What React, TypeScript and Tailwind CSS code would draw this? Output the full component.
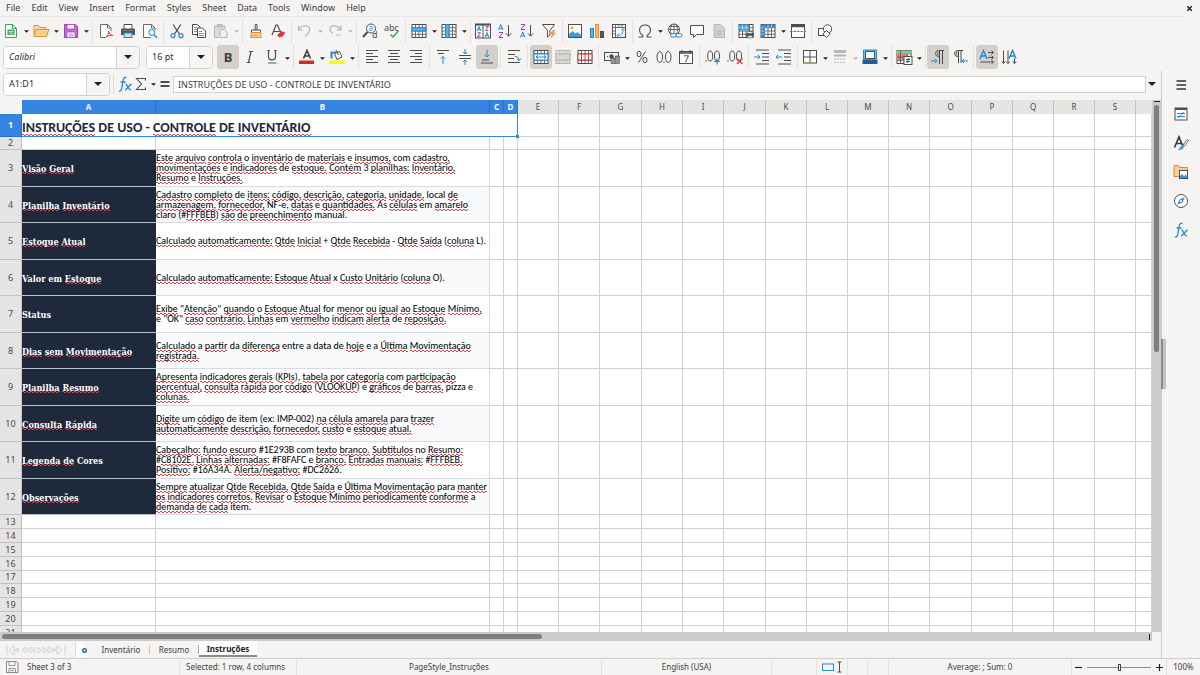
import React from "react";

type Item =
  | { kind: "icon"; name: string; label: string; pressed?: boolean; disabled?: boolean; menu?: boolean }
  | { kind: "sep" }
  | { kind: "thin" };

const G = "#4d4d4d";
const B = "#1e8bcd";
const L = "#b8b6b3";

const lines = (rows: [number, number, number][], color = G) =>
  rows.map(([x1, x2, y], i) => <path key={i} d={`M${x1} ${y}H${x2}`} stroke={color} />);

const gridBase = (stroke: string, fill = "#fff") => (
  <>
    <rect x="1" y="1.5" width="14" height="13" fill={fill} stroke={stroke} />
    <path d="M4.5 1.5v13M8 1.5v13M11.500 1.500v13M1 4.700h14M1 8h14M1 11.300h14" stroke={stroke} strokeWidth=".8" />
  </>
);

const art: Record<string, React.ReactNode> = {
  newdoc: (
    <>
      <path d="M2.500 1.500h7l4 4v9h-11z" fill="#fff" stroke="#3fa55a" />
      <path d="M9.500 1.500v4h4" stroke="#3fa55a" />
      <rect x="4.500" y="6.500" width="7" height="5.500" fill="#3fa55a" />
      <path d="M5.500 8.500h5M5.500 10.300h5M8 7.500v4" stroke="#d7efdc" strokeWidth=".7" />
    </>
  ),
  open: (
    <>
      <path d="M1 13V2.500h4.500l1.500 2h6v2.500" fill="#f8d9a8" stroke="#e0933a" />
      <path d="M1 13.500L3 6.500h13l-2.500 7z" fill="#fbd08d" stroke="#e0933a" />
    </>
  ),
  save: (
    <>
      <path d="M1.500 1.500h11l2 2v11h-13z" fill="#c06fd0" stroke="#a13fb8" />
      <rect x="4" y="1.500" width="7.500" height="4.500" fill="#f6f0f8" stroke="#a13fb8" strokeWidth=".7" />
      <rect x="4" y="9" width="8" height="5.500" fill="#fff" stroke="#a13fb8" strokeWidth=".7" />
      <path d="M5.500 11h5M5.500 12.800h5" stroke="#a13fb8" strokeWidth=".7" />
    </>
  ),
  pdf: (
    <>
      <path d="M13 8V5L9.500 1.500h-7v13H7" fill="#fff" stroke="#6b6b6b" />
      <path d="M9.500 1.500V5H13" stroke="#6b6b6b" />
      <path d="M7.500 14.500c2-1.500 3.500-4 3-6.500 1 3 2.500 4.500 4.500 4.500-2-.5-5 0-7.500 2z" stroke="#e0343f" />
    </>
  ),
  print: (
    <>
      <path d="M4 6V1.500h8V6" fill="#fff" stroke={G} />
      <rect x="1" y="5.500" width="14" height="6.500" rx="1" fill="#4d5358" />
      <path d="M2 7.500h12" stroke="#8a9095" strokeWidth=".7" />
      <rect x="4" y="10" width="8" height="4.500" fill="#bfe0f5" stroke={B} />
    </>
  ),
  preview: (
    <>
      <path d="M13 7V5L9.500 1.500h-8v13h7" fill="#fff" stroke="#6b6b6b" />
      <path d="M9.500 1.500V5H13" stroke="#6b6b6b" />
      <circle cx="9.800" cy="9.500" r="3" fill="#e4f2fb" stroke={B} />
      <path d="M12 11.800l3 3" stroke={B} strokeWidth="1.400" />
    </>
  ),
  cut: (
    <>
      <path d="M4 1.500l6.500 9.500M12 1.500L5.500 11" stroke="#454545" strokeWidth="1.200" />
      <circle cx="4" cy="12.700" r="2" stroke={B} strokeWidth="1.200" />
      <circle cx="12" cy="12.700" r="2" stroke={B} strokeWidth="1.200" />
    </>
  ),
  copy: (
    <>
      <path d="M1.500 1.500h5L9 4v7.500H1.500z" fill="#fff" stroke={G} />
      <path d="M3 4.500h3M3 6.500h3M3 8.500h3" stroke={B} strokeWidth=".8" />
      <path d="M6.500 5h5l3 3v6.500h-8z" fill="#fff" stroke={G} />
      <path d="M8 8.500h3M8 10.500h5M8 12.500h5" stroke={B} strokeWidth=".8" />
    </>
  ),
  paste: (
    <>
      <path d="M12 6V3H1.500v11.500H6" fill="#dedcd9" stroke={L} />
      <rect x="4.500" y="1.500" width="4.500" height="2.500" fill="#c9c7c4" stroke={L} />
      <path d="M7 6.500h4.500L14 9v5.500H7z" fill="#efeeec" stroke={L} />
    </>
  ),
  brush: (
    <>
      <path d="M7.200 1.500h1.800v5.500H7.200z" fill="#fff" stroke={G} />
      <path d="M3.500 9.500V7h9v2.500z" fill="#fff" stroke={G} />
      <path d="M3.500 9.500h9l.8 5H2.500z" fill="#fbd08d" stroke="#e0933a" />
      <path d="M3 12.500h7" stroke="#e0933a" strokeWidth=".8" />
    </>
  ),
  clear: (
    <>
      <path d="M2 12L6 2h1.500l3.500 8M3.500 8.500h6" stroke={G} strokeWidth="1.200" />
      <path d="M7.500 12l4-3.500 3.500 1.500-3 3.500-3 .5z" fill="#e0343f" stroke="#c9252f" strokeWidth=".6" />
    </>
  ),
  undo: <path d="M1.500 2.500v4.500H6M1.800 6.800C4.500 2 11 1.500 12.500 5.500c1 3-1.500 5-4.500 8" stroke={L} strokeWidth="1.200" />,
  redo: <path d="M14 2.500v4.500H9.500M13.700 6.800C11 2 4.500 1.500 3 5.500c-.6 3 1.500 4 3 4.500M9 12h5" stroke={L} strokeWidth="1.200" />,
  find: (
    <>
      <circle cx="9" cy="5.500" r="4.500" fill="#fff" stroke={G} />
      <path d="M5.500 9L1 14" stroke={G} strokeWidth="2" />
      <text x="6.500" y="8" fontSize="8" fill={B} fontFamily="Noto Sans">a</text>
      <text x="10" y="15" fontSize="9" fill={G} fontFamily="Noto Sans">d</text>
    </>
  ),
  spell: (
    <>
      <text x="0" y="7.500" fontSize="9" fill={G} fontFamily="Noto Sans">abc</text>
      <path d="M6.500 11.500l2.500 2.500 5.500-6" stroke="#2fae6b" strokeWidth="1.500" />
    </>
  ),
  row: (
    <>
      {gridBase(G)}
      <path d="M1 4.700h14v3.300H1z" fill="#5cb0e6" stroke={B} />
    </>
  ),
  col: (
    <>
      {gridBase(G)}
      <path d="M4.500 1.500H8v13H4.500z" fill="#5cb0e6" stroke={B} />
    </>
  ),
  sort: (
    <>
      <rect x=".500" y="1" width="15" height="14" fill="#fff" stroke={G} />
      <path d="M.5 1.800h15" stroke={G} strokeWidth="1.500" />
      <path d="M8 2v13" stroke={G} />
      <path d="M2.200 8l1.800-4.500L5.800 8M2.800 6.600h2.400M10.200 14l1.800-4.500 1.800 4.500M10.800 12.600h2.400" stroke={B} />
      <path d="M2.500 9.700h3l-3 4h3M10.500 3.700h3l-3 4h3" stroke="#a13fb8" />
    </>
  ),
  az: (
    <>
      <path d="M1.500 7l2.300-5.500L6 7M2.300 5.300h3" stroke={B} />
      <path d="M2 9.500h4L2 14.500h4" stroke="#a13fb8" />
      <path d="M11.500 2v11M8.800 10.300l2.700 2.900 2.700-2.900" stroke={G} />
    </>
  ),
  za: (
    <>
      <path d="M2 1.500h4L2 6.500h4" stroke="#a13fb8" />
      <path d="M1.500 14.500L3.800 9 6 14.500M2.300 12.800h3" stroke={B} />
      <path d="M11.500 2v11M8.800 10.300l2.700 2.900 2.700-2.900" stroke={G} />
    </>
  ),
  filter: (
    <>
      <path d="M1.500 1.500h12L9 7.500V12L6.500 14V7.500z" fill="#fff" stroke={G} />
      <path d="M12.500 7l-3 4h2L10 15l4.500-5h-2l1-3z" fill="#f5a33c" stroke="#e0843a" strokeWidth=".5" />
    </>
  ),
  image: (
    <>
      <rect x="1.500" y="1.500" width="13" height="13" fill="#fff" stroke={G} />
      <path d="M2 14v-3l3.500-3 3 2.500 2-1.500 3.500 3v2z" fill="#3d9bdc" />
      <circle cx="5" cy="4.800" r="1.500" fill="#f5a33c" />
    </>
  ),
  chart: (
    <>
      <rect x="1.500" y="5.500" width="3" height="9" fill="#5cb0e6" stroke={B} />
      <rect x="6.500" y="1.500" width="3" height="13" fill="#fbb95c" stroke="#e0933a" />
      <rect x="11.500" y="8.500" width="3" height="6" fill="#5b5b5b" stroke={G} />
    </>
  ),
  pivot: (
    <>
      <rect x="1.500" y="1.500" width="13" height="13" fill="#fff" stroke={G} />
      <path d="M1.500 4.500h13M4.500 1.500v13M8 1.500v3M11 1.500v3M1.500 8h3M1.500 11h3" stroke={G} strokeWidth=".8" />
      <path d="M7 12.500c4 0 5-2 5-6M5.800 12.500l2-2M5.800 12.500l2 2M12 5.500l-2 2M12 5.500l2 2" stroke={B} />
    </>
  ),
  omega: <path d="M1.500 14h4.300v-1.800C1 9.500 1.500 2 8 2s7 7.500 2.200 10.200V14h4.300" stroke={G} strokeWidth="1.100" />,
  link: (
    <>
      <circle cx="7" cy="6.500" r="5.500" fill="#fff" stroke={G} />
      <path d="M1.500 6.500h11M7 1v11M2.500 3.500h9M4.500 11c-1.500-3-1.500-6 .5-9.500M9.500 11c1.500-3 1.500-6-.5-9.500" stroke={G} strokeWidth=".8" />
      <rect x="3.500" y="10.500" width="6" height="3.500" rx="1.700" fill="#f5f4f2" stroke={B} />
      <rect x="9" y="10.500" width="6" height="3.500" rx="1.700" fill="#f5f4f2" stroke={B} />
    </>
  ),
  comment: <path d="M1.500 2.500h13v9h-7l-3 3v-3h-3z" fill="#fff" stroke={G} />,
  footer: (
    <>
      <path d="M3 1.500h6.500L13.500 5v9.500H3z" fill="#d4d2cf" stroke={L} />
      <path d="M5 8h6M5 10h6M5 12h6" stroke={L} />
    </>
  ),
  printarea: (
    <>
      {gridBase(G)}
      <path d="M1 1.500h10v6H1z" fill="#3d9bdc" />
      <path d="M4.500 1.500v6M8 1.500v6M1 4.700h10" stroke="#cfe7f7" strokeWidth=".7" />
      <rect x="8" y="10" width="8" height="3.500" rx=".500" fill="#4d5358" />
      <rect x="10" y="8.500" width="4" height="2" fill="#fff" stroke={G} strokeWidth=".6" />
      <rect x="10" y="12.500" width="4" height="2.500" fill="#bfe0f5" stroke={B} strokeWidth=".6" />
    </>
  ),
  freeze: (
    <>
      {gridBase(G)}
      <path d="M1 1.500h14v3.200H4.500v9.800H1z" fill="#2f8fd6" />
      <path d="M1 4.700h3.500M8 1.500v3.200M11.500 1.500v3.200M1 8h3.500M1 11.300h3.500" stroke="#bfe0f5" strokeWidth=".7" />
    </>
  ),
  split: (
    <>
      <rect x="1.500" y="1.500" width="13" height="13" fill="#fff" stroke={G} />
      <path d="M1.500 3h13" stroke={G} strokeWidth="2.500" />
      <path d="M0 8.500h16" stroke={B} strokeDasharray="2.500 1" />
    </>
  ),
  shapes: (
    <>
      <rect x="1.500" y="5.500" width="7" height="7" fill="#fff" stroke={G} />
      <circle cx="10.500" cy="6" r="4.200" fill="#fff" stroke={G} />
      <path d="M9.500 7.500l3.700 3.500-3.700 3.500L5.800 11z" fill="#fff" stroke={G} />
    </>
  ),
  italic: <path d="M7 2.500h4M4.500 13.500h4M9 2.500L6.500 13.500" stroke={G} strokeWidth="1.200" />,
  underline: (
    <>
      <path d="M3.500 1.500h2.500M10 1.500h2.500M4.500 1.500v6c0 4.500 7 4.500 7 0v-6" stroke={G} strokeWidth="1.200" />
      <path d="M4 14h8.500" stroke={B} strokeWidth="1.200" />
    </>
  ),
  fontcolor: (
    <>
      <path d="M4.500 9.500L8 1.500l3.500 8M5.700 7h4.700" stroke="#3d3d3d" strokeWidth="1.600" />
      <rect x="0" y="11.500" width="15" height="3.500" fill="#c9302a" />
    </>
  ),
  highlight: (
    <>
      <path d="M2.500 9.500V3.500h5" stroke={B} strokeWidth="2" />
      <path d="M5.500 4.500l5-2 2.500 5.500-5 2.500z" fill="#fff" stroke={G} />
      <path d="M7 1l2.500 5" stroke={G} />
      <rect x="0" y="11.500" width="16" height="3.500" fill="#fcfc10" />
    </>
  ),
  left: <>{lines([[2, 14, 1.5], [2, 9, 4.500], [2, 14, 7.500], [2, 9, 10.500], [2, 14, 13.500]])}</>,
  center: <>{lines([[2, 14, 1.5], [4, 12, 4.500], [2, 14, 7.500], [4, 12, 10.500], [2, 14, 13.500]])}</>,
  right: <>{lines([[2, 14, 1.5], [7, 14, 4.500], [2, 14, 7.500], [7, 14, 10.500], [2, 14, 13.500]])}</>,
  top: (
    <>
      {lines([[2, 14, 1.5], [3, 9, 4.500]])}
      <path d="M8 15V7.500M5.800 9.700L8 7.500l2.200 2.200" stroke={B} />
    </>
  ),
  middle: (
    <>
      {lines([[2, 14, 6.5], [2, 14, 9.500]])}
      <path d="M8 0v5M6 3l2 2 2-2M8 16v-5M6 13l2-2 2 2" stroke={B} />
    </>
  ),
  bottom: (
    <>
      {lines([[3, 10, 11], [2, 14, 14]])}
      <path d="M8 1v7M5.800 5.800L8 8l2.200-2.200" stroke={B} />
    </>
  ),
  wrap: (
    <>
      {lines([[2, 14, 1.5], [2, 9, 5.5], [2, 8, 9.500], [2, 14, 13.500]])}
      <path d="M9 7.500c3 0 4 1.500 4 4M10.800 9.500l2.200 2.200 2.200-2.200" stroke={B} />
    </>
  ),
  merge: (
    <>
      {gridBase(G)}
      <path d="M1 5h14v6H1z" fill="#fff" stroke={B} />
      <path d="M3 8h10M5 6.300L3 8l2 1.700M11 6.300L13 8l-2 1.700" stroke={B} />
    </>
  ),
  mergecells: (
    <>
      {gridBase(L, "#e6e4e1")}
      <path d="M1 5h14v6H1z" fill="#dad8d5" stroke={L} />
    </>
  ),
  unmerge: (
    <>
      {gridBase(G)}
      <path d="M1 5h14v6H1zM4.500 5v6M8 5v6M11.500 5v6" fill="#fff" stroke="#e0343f" />
    </>
  ),
  currency: (
    <>
      <rect x=".500" y="3.500" width="14" height="8" stroke={G} />
      <circle cx="7.500" cy="7.500" r="2.200" fill={G} />
      <path d="M3 7.500h1M11 7.500h1" stroke={G} />
      <rect x="7" y="9" width="4" height="5.500" fill="#777" stroke={G} strokeWidth=".6" />
      <rect x="11.500" y="7" width="4" height="7.500" fill="#777" stroke={G} strokeWidth=".6" />
      <path d="M7 11h4M7 13h4M11.500 9h4M11.500 11h4M11.500 13h4" stroke="#ddd" strokeWidth=".6" />
    </>
  ),
  percent: (
    <>
      <ellipse cx="5" cy="5" rx="2" ry="2.700" stroke={G} />
      <ellipse cx="11" cy="11" rx="2" ry="2.700" stroke={G} />
      <path d="M11.500 2.500l-7 11" stroke={G} />
    </>
  ),
  number: (
    <>
      <ellipse cx="3.800" cy="8" rx="2.800" ry="5.500" stroke={G} />
      <ellipse cx="12.200" cy="8" rx="2.800" ry="5.500" stroke={G} />
      <path d="M8 12.500v1.500" stroke={G} />
    </>
  ),
  date: (
    <>
      <rect x="1.500" y="2.500" width="13" height="12" fill="#fff" stroke={G} />
      <path d="M1.500 4h13" stroke={G} strokeWidth="1.500" />
      <path d="M4 1v3M12 1v3" stroke={G} />
      <path d="M6 6.800h4.500L7.500 13" stroke={G} />
    </>
  ),
  adddec: (
    <>
      <ellipse cx="5.200" cy="7" rx="2.500" ry="5" stroke={G} />
      <ellipse cx="12" cy="7" rx="2.500" ry="5" stroke={G} />
      <path d="M1 11v1.500" stroke={G} />
      <path d="M12 9.500v6M9 12.500h6" stroke={B} strokeWidth="1.200" />
    </>
  ),
  deldec: (
    <>
      <ellipse cx="5.200" cy="7" rx="2.500" ry="5" stroke={G} />
      <ellipse cx="12" cy="7" rx="2.500" ry="5" stroke={G} />
      <path d="M1 11v1.500" stroke={G} />
      <path d="M10 9.500l5.500 5.500M15.500 9.500L10 15" stroke="#e0343f" strokeWidth="1.200" />
    </>
  ),
  indent: (
    <>
      {lines([[2, 15, 1], [8, 15, 4.500], [8, 15, 8], [8, 15, 11.500], [2, 15, 15]])}
      <path d="M0 8h6M3.800 5.800L6 8l-2.200 2.200" stroke={B} />
    </>
  ),
  outdent: (
    <>
      {lines([[2, 15, 1], [8, 15, 4.500], [8, 15, 8], [8, 15, 11.500], [2, 15, 15]])}
      <path d="M0 8h6M2.200 5.800L0 8l2.200 2.200" stroke={B} />
    </>
  ),
  borders: (
    <>
      <rect x="1.500" y="1.500" width="13" height="12.500" fill="#fff" stroke={G} />
      <path d="M8 1.500V14M1.500 8h13" stroke={G} />
      <path d="M1.500 14.300h13" stroke="#e0933a" />
    </>
  ),
  linestyle: (
    <>
      <path d="M2 2.500h12" stroke={L} strokeWidth="3" />
      <path d="M2 6.500h12" stroke={L} strokeWidth="2" />
      <path d="M2 10h12M2 13.500h12" stroke={L} strokeDasharray="2 1" />
    </>
  ),
  fill: (
    <>
      <path d="M1.500 1h13v9h-13z" fill="#7fc0ea" stroke={B} />
      <path d="M3.500 2.500h9v7h-9z" fill="#fff" stroke={G} />
      <path d="M.5 10.500h15v4.500H.5z" fill="#225d9c" />
    </>
  ),
  cond: (
    <>
      {gridBase(G)}
      <path d="M1 1.500h14v3.200H1z" fill="#7fcf8f" />
      <path d="M1 4.700h10V11H1z" fill="#ee7a72" />
      <path d="M4.500 1.500v13M1 8h10" stroke={G} strokeWidth=".7" />
      <rect x="8" y="7.500" width="8" height="8" fill="#fff" stroke={G} />
      <path d="M10 10.500h4M10 12.500h4M13 9l-2 5" stroke={G} />
    </>
  ),
  ltr: (
    <>
      <path d="M14 1.500H8.500c-4 0-4 6 0 6H9M9.500 1.500V15M12.500 1.500V15" stroke={G} />
      <path d="M8.500 2C6 2 6 7 8.500 7z" fill="#8a8a8a" />
      <path d="M1 12h6M5 10l2 2-2 2" stroke={B} />
    </>
  ),
  rtl: (
    <>
      <path d="M11 1.500H5.500c-4 0-4 6 0 6H6M6.500 1.500V14M9 1.500V14" stroke={G} />
      <path d="M5.500 2C2.500 2 2.500 7 5.500 7z" fill="#8a8a8a" />
      <path d="M16 12h-6M12 10l-2 2 2 2" stroke={B} />
    </>
  ),
  horiz: (
    <>
      <path d="M1 10L4.500 1.500 8 10M2.300 7h4.500" stroke={B} strokeWidth="1.400" />
      <path d="M9 3.500h5.500M9 8.500h5.500M1.500 13h13M12.500 1.700l2 1.800-2 1.800M12.500 6.700l2 1.800-2 1.800M12.500 11.200l2 1.800-2 1.800" stroke={G} />
    </>
  ),
  vert: (
    <>
      <path d="M8 9.500L11.500 1.500 15 9.500M9.300 7h4.500" stroke={B} strokeWidth="1.400" />
      <path d="M2.500 1.500v13M7 1.500v13M13.500 9.500v5M.8 12.500l1.700 2 1.700-2M5.300 12.500l1.700 2 1.700-2M11.800 12.500l1.700 2 1.700-2" stroke={G} />
    </>
  ),
  fx: (
    <>
      <path d="M2 15c2 .5 2.600-1.500 3-4l1.200-7C6.600 1.800 7.800.8 9.500 1.500M3.500 6h5" stroke={B} strokeWidth="1.300" />
      <path d="M8.500 8c2 0 2.500 6 5.500 6M14.500 8c-2 .5-4 5.500-6.500 6" stroke={B} strokeWidth="1.300" />
    </>
  ),
  sigma: <path d="M12.500 4.500V2.500h-9L8.500 8l-5 5.500h9v-2" stroke={G} strokeWidth="1.100" />,
  equals: <path d="M3.500 6h9M3.500 10h9" stroke={G} strokeWidth="1.800" />,
  burger: <path d="M3.500 4h9.500M3.500 8h9.500M3.500 12h9.500" stroke="#333" strokeWidth="1.500" />,
  properties: (
    <>
      <rect x="2" y="2" width="12" height="12" fill="#fff" stroke={G} />
      <path d="M2 3h12" stroke={G} strokeWidth="2" />
      <path d="M4 7.500h8M4 10.500h8M10.500 6l-2 3M7.500 9l-2 3" stroke={B} />
    </>
  ),
  styles: (
    <>
      <path d="M1.500 12.500L6 2l3.500 8.500M3 8.500h5.500" stroke="#3d3d3d" strokeWidth="1.700" />
      <path d="M10 10l4-5.500 1.500 1L11.500 11z" fill="#fff" stroke={G} strokeWidth=".8" />
      <path d="M4.500 15c2-.5 2.500-4 5-4.500l1.500 1c0 2.500-3 4-6.500 3.500z" fill="#3d9bdc" />
    </>
  ),
  gallery: (
    <>
      <path d="M1 12.500v-11h4.500l1 2h8v9z" fill="#fbd08d" stroke="#e0843a" />
      <rect x="6.500" y="6.500" width="8" height="8" fill="#fff" stroke={G} />
      <path d="M7 14v-2l2-2 2 2 1.500-1.500L14 12v2z" fill="#3d9bdc" />
    </>
  ),
  navigator: (
    <>
      <circle cx="8" cy="8" r="6.500" fill="#fff" stroke={G} />
      <path d="M11.800 4.200L9.500 9.500l-5.300 2.300L6.500 6.500z" fill="#2f8fd6" />
      <circle cx="8" cy="8" r="1.100" fill="#fff" />
    </>
  ),
  disk: (
    <>
      <path d="M2.500 2.500h10l1.500 1.500v9.500H2.500z" stroke="#8c8c8c" />
      <path d="M5 2.500v4h6v-4M5 13.500V9.500h6.500v4M6.500 11.500h3.500" stroke="#8c8c8c" strokeWidth=".9" />
    </>
  ),
};

function Glyph({ name }: { name: string }) {
  return (
    <svg viewBox="0 0 16 16" fill="none" aria-hidden="true" className="size-4 shrink-0 overflow-visible">
      {art[name]}
    </svg>
  );
}

function Caret({ dim = false, large = false }: { dim?: boolean; large?: boolean }) {
  return (
    <svg viewBox="0 0 8 4" aria-hidden="true" className={large ? "h-1 w-2" : "h-[3px] w-[5px]"}>
      <path d="M0 0h8L4 4z" fill={dim ? "#b8b6b3" : "#1f1f1f"} />
    </svg>
  );
}

const ic = (name: string, label: string, extra: object = {}): Item => ({ kind: "icon", name, label, ...extra });
const sep: Item = { kind: "sep" };
const thin: Item = { kind: "thin" };

const standard: Item[] = [
  ic("newdoc", "New", { menu: true }), ic("open", "Open", { menu: true }), ic("save", "Save", { menu: true }), sep,
  ic("pdf", "Export as PDF"), ic("print", "Print"), ic("preview", "Print Preview"), sep,
  ic("cut", "Cut"), ic("copy", "Copy"), ic("paste", "Paste", { menu: true, disabled: true }), sep,
  ic("brush", "Clone Formatting"), ic("clear", "Clear Formatting"), sep,
  ic("undo", "Undo", { menu: true, disabled: true }), ic("redo", "Redo", { menu: true, disabled: true }), sep,
  ic("find", "Find and Replace"), ic("spell", "Spelling"), sep,
  ic("row", "Row", { menu: true }), ic("col", "Column", { menu: true }), thin,
  ic("sort", "Sort"), ic("az", "Sort Ascending"), ic("za", "Sort Descending"), ic("filter", "AutoFilter"), thin,
  ic("image", "Insert Image"), ic("chart", "Insert Chart"), ic("pivot", "Pivot Table"), thin,
  ic("omega", "Special Character", { menu: true }), ic("link", "Hyperlink"), ic("comment", "Comment"), ic("footer", "Headers and Footers", { disabled: true }), sep,
  ic("printarea", "Print Area"), ic("freeze", "Freeze", { menu: true }), ic("split", "Split Window"), sep,
  ic("shapes", "Draw Functions"),
];

const formatting: Item[] = [
  ic("bold", "Bold", { pressed: true }), ic("italic", "Italic"), ic("underline", "Underline", { menu: true }), sep,
  ic("fontcolor", "Font Color", { menu: true }), ic("highlight", "Background Color", { menu: true }), sep,
  ic("left", "Align Left"), ic("center", "Center Horizontally"), ic("right", "Align Right"), sep,
  ic("top", "Align Top"), ic("middle", "Center Vertically"), ic("bottom", "Align Bottom", { pressed: true }), sep,
  ic("wrap", "Wrap Text"), sep,
  ic("merge", "Merge and Center", { pressed: true }), ic("mergecells", "Merge Cells", { disabled: true }), ic("unmerge", "Unmerge Cells"), sep,
  ic("currency", "Currency", { menu: true }), ic("percent", "Percent"), ic("number", "Number"), ic("date", "Date"), sep,
  ic("adddec", "Add Decimal Place"), ic("deldec", "Delete Decimal Place"), sep,
  ic("indent", "Increase Indent"), ic("outdent", "Decrease Indent"), thin,
  ic("borders", "Borders", { menu: true }), ic("linestyle", "Border Style", { menu: true, disabled: true }), ic("fill", "Border Color", { menu: true }), thin,
  ic("cond", "Conditional", { menu: true }), thin,
  ic("ltr", "Left-To-Right", { pressed: true }), ic("rtl", "Right-To-Left"), sep,
  ic("horiz", "Text Direction Horizontal", { pressed: true }), ic("vert", "Text Direction Vertical"),
];

function Tools({ items, label }: { items: Item[]; label: string }) {
  return (
    <div role="toolbar" aria-label={label} className="flex items-center">
      {items.map((it, i) => {
        if (it.kind !== "icon")
          return (
            <span key={i} className={`flex h-6 shrink-0 justify-center ${it.kind === "sep" ? "w-[5px]" : "w-1"}`}>
              <span className="w-px bg-[#e4e2df]" />
            </span>
          );
        return (
          <React.Fragment key={i}>
            <button
              type="button"
              aria-label={it.label}
              aria-pressed={it.pressed}
              disabled={it.disabled}
              className={`flex h-6 w-[22px] shrink-0 items-center justify-center rounded-[3px] ${it.pressed ? "bg-[#d3d0cc]" : ""}`}
            >
              {it.name === "bold" ? <b className="text-[13px] leading-none text-[#3d3d3d]">B</b> : <Glyph name={it.name} />}
            </button>
            {it.menu && (
              <button type="button" aria-label={`${it.label} options`} disabled={it.disabled} className="flex h-6 w-2 shrink-0 items-center justify-center pt-0.5">
                <Caret dim={it.disabled} />
              </button>
            )}
          </React.Fragment>
        );
      })}
    </div>
  );
}

function Combo({ label, value, width, italic = false }: { label: string; value: string; width: string; italic?: boolean }) {
  return (
    <div className={`flex h-[23px] shrink-0 overflow-hidden rounded-[4px] border border-[#d5d2ce] bg-white ${width}`}>
      <input aria-label={label} defaultValue={value} className={`min-w-0 flex-1 bg-white px-[5px] text-[9px] text-[#2e2e2e] outline-none ${italic ? "italic" : ""}`} />
      <button type="button" aria-label={`${label} list`} className="flex w-[23px] shrink-0 items-center justify-center border-l border-[#d5d2ce] bg-[#f6f5f4]">
        <Caret large />
      </button>
    </div>
  );
}

function Marked({ text }: { text: string }) {
  return (
    <>
      {text.split(/(\[[^\]]*\])/).map((part, i) =>
        part.startsWith("[") ? (
          <span
            key={i}
            className="bg-[image:linear-gradient(90deg,#e8404a_50%,transparent_50%),linear-gradient(90deg,transparent_50%,#e8404a_50%)] bg-[length:4px_1px] bg-[position:0_calc(100%-1px),0_100%] bg-repeat-x"
          >
            {part.slice(1, -1)}
          </span>
        ) : (
          part
        ),
      )}
    </>
  );
}

const guide: { title: string; lines: string[] }[] = [
  { title: "[Visão] [Geral]", lines: ["[Este] [arquivo] [controla] o [inventário] de [materiais] e [insumos,] com [cadastro,]", "[movimentações] e [indicadores] de [estoque.] [Contém] 3 [planilhas:] [Inventário,]", "[Resumo] e [Instruções.]"] },
  { title: "[Planilha] [Inventário]", lines: ["[Cadastro] [completo] de [itens:] [código,] [descrição,] [categoria,] [unidade,] local [de]", "[armazenagem,] [fornecedor,] NF-e, [datas] e [quantidades.] As [células] em [amarelo]", "claro (#[FFFBEB]) [são] [de] [preenchimento] manual."] },
  { title: "[Estoque] [Atual]", lines: ["[Calculado] [automaticamente:] [Qtde] [Inicial] + [Qtde] [Recebida] - [Qtde] [Saída] ([coluna] L)."] },
  { title: "Valor em [Estoque]", lines: ["[Calculado] [automaticamente:] [Estoque] [Atual] x [Custo] [Unitário] ([coluna] O)."] },
  { title: "Status", lines: ["[Exibe] \"[Atenção]\" [quando] o [Estoque] [Atual] for [menor] [ou] [igual] [ao] [Estoque] [Mínimo,]", "e \"OK\" [caso] [contrário.] [Linhas] em [vermelho] [indicam] [alerta] de [reposição.]"] },
  { title: "[Dias] [sem] [Movimentação]", lines: ["[Calculado] a [partir] da [diferença] entre a data de [hoje] e a [Última] [Movimentação]", "[registrada.]"] },
  { title: "[Planilha] [Resumo]", lines: ["[Apresenta] [indicadores] [gerais] ([KPIs]), [tabela] [por] [categoria] com [participação]", "[percentual,] [consulta] [rápida] [por] [código] ([VLOOKUP]) e [gráficos] de [barras,] pizza e", "[colunas.]"] },
  { title: "[Consulta] [Rápida]", lines: ["[Digite] um [código] de item (ex: IMP-002) [na] [célula] [amarela] para [trazer]", "[automaticamente] [descrição,] [fornecedor,] [custo] e [estoque] [atual.]"] },
  { title: "[Legenda] [de] Cores", lines: ["[Cabeçalho:] [fundo] [escuro] #1E293B com [texto] [branco.] [Subtítulos] no [Resumo:]", "#[C8102E.] [Linhas] [alternadas:] #F8FAFC e [branco.] [Entradas] [manuais:] #[FFFBEB.]", "[Positivo:] #16A34A. [Alerta/negativo:] #DC2626."] },
  { title: "[Observações]", lines: ["[Sempre] [atualizar] [Qtde] [Recebida,] [Qtde] [Saída] e [Última] [Movimentação] para [manter]", "[os] [indicadores] [corretos.] [Revisar] o [Estoque] [Mínimo] [periodicamente] [conforme] a", "[demanda] [de] [cada] item."] },
];

const wide = ["G", "J", "O"];
const extraCols = "EFGHIJKLMNOPQRS".split("");
const trailing = Array.from({ length: 9 }, (_, i) => i + 13);
const line = "border-r border-b border-[#d0d0d0]";
const rowHead = "border-r border-b border-[#c4c2bf] bg-[#e6e4e2] p-0 text-center text-[9px] font-normal text-[#4a4a4a]";
const colHead = "border-r border-[#c4c2bf] bg-[#e6e4e2] p-0 text-center text-[8px] font-normal text-[#4a4a4a]";
const colHeadOn = "border-r border-[#2a6fc9] bg-[#3584e4] p-0 text-center text-[8px] font-bold text-white";

function Blank({ from = 0 }: { from?: number }) {
  const n = extraCols.length + 3 - from;
  return (
    <>
      {Array.from({ length: n }, (_, i) => (
        <td key={i} className={`p-0 ${line}`} />
      ))}
    </>
  );
}

function Sheet() {
  return (
    <table className="w-full min-w-[1152px] table-fixed border-separate border-spacing-0 bg-white leading-[12px]">
      <colgroup>
        <col className="w-[22px]" />
        <col className="w-[134px]" />
        <col className="w-[334px]" />
        <col className="w-[14px]" />
        <col className="w-[14px]" />
        {extraCols.map((c) => (
          <col key={c} className={wide.includes(c) ? "w-[42px]" : "w-[41px]"} />
        ))}
        <col />
      </colgroup>
      <thead>
        <tr className="h-[14px]">
          <td className="bg-[#f5f4f2] p-0" />
          {["A", "B", "C", "D"].map((c) => (
            <th key={c} scope="col" className={colHeadOn}>{c}</th>
          ))}
          {extraCols.map((c) => (
            <th key={c} scope="col" className={colHead}>{c}</th>
          ))}
          <td className="bg-[#e6e4e2] p-0" />
        </tr>
      </thead>
      <tbody>
        <tr className="h-[23px]">
          <th scope="row" className="border-r border-b border-[#2a6fc9] bg-[#3584e4] p-0 text-center text-[9px] font-bold text-white">1</th>
          <td colSpan={4} className="relative border-r border-b border-[#3584e4] p-0 pt-[5px] text-[14px] leading-[16px] font-bold whitespace-nowrap text-[#1e293b] [font-family:Carlito,Lato,sans-serif]">
            <Marked text="[INSTRUÇÕES] DE USO - [CONTROLE] DE [INVENTÁRIO]" />
            <span className="absolute -right-0.5 -bottom-0.5 size-[3px] bg-[#3584e4]" />
          </td>
          <Blank from={2} />
        </tr>
        <tr className="h-[13px]">
          <th scope="row" className={rowHead}>2</th>
          <td className={`p-0 ${line}`} />
          <td className={`p-0 ${line}`} />
          <Blank />
        </tr>
        {guide.map((g, i) => (
          <tr key={g.title} className={i % 2 ? "h-[36px]" : "h-[37px]"}>
            <th scope="row" className={rowHead}>{i + 3}</th>
            <td className="border-b border-[#b9c3cf] bg-[#1e293b] p-0 pt-0.5 text-[9px] font-bold whitespace-nowrap text-white [font-family:'DejaVu_Serif_Condensed','DejaVu_Serif',serif]">
              <Marked text={g.title} />
            </td>
            <td className={`border-r border-b border-[#d6dce2] p-0 text-[10px] leading-[10px] whitespace-nowrap text-black [font-family:Carlito,Lato,sans-serif] ${i % 2 ? "bg-[#f8fafc]" : "bg-white"}`}>
              {g.lines.map((l) => (
                <div key={l}><Marked text={l} /></div>
              ))}
            </td>
            <Blank />
          </tr>
        ))}
        {trailing.map((n) => (
          <tr key={n} className={n === 17 ? "h-[13px]" : "h-[14px]"}>
            <th scope="row" className={rowHead}>{n}</th>
            <td className={`p-0 ${line}`} />
            <td className={`p-0 ${line}`} />
            <Blank />
          </tr>
        ))}
      </tbody>
    </table>
  );
}

const menus = ["File", "Edit", "View", "Insert", "Format", "Styles", "Sheet", "Data", "Tools", "Window", "Help"];
const panels: [string, string][] = [
  ["burger", "Sidebar Settings"], ["properties", "Properties"], ["styles", "Styles"],
  ["gallery", "Gallery"], ["navigator", "Navigator"], ["fx", "Functions"],
];

export default function App() {
  return (
    <div className="flex h-screen flex-col overflow-hidden bg-[#f5f4f2] text-[#3d3d3d] [font-family:'Noto_Sans',sans-serif]">
      <header className="shrink-0">
        <nav aria-label="Main menu" className="mr-4 flex h-[17px] items-center gap-[11px] border-b border-[#e8e6e3] pl-[6px] text-[9px]">
          {menus.map((m) => (
            <button type="button" key={m}>{m}</button>
          ))}
          <button type="button" aria-label="Close document" className="-mr-2 ml-auto">
            <svg viewBox="0 0 6 6" className="size-[5px]"><path d="M0 0l6 6M6 0L0 6" stroke="#222" strokeWidth="1.700" /></svg>
          </button>
        </nav>
        <div className="flex h-[27px] items-center"><Tools items={standard} label="Standard" /></div>
        <div className="flex h-[27px] items-center pb-px pl-[3px]">
          <Combo label="Font Name" value="Calibri" width="w-[137px]" italic />
          <span className="w-1.5" />
          <Combo label="Font Size" value="16 pt" width="w-[67px]" />
          <span className="w-1" />
          <Tools items={formatting} label="Formatting" />
        </div>
      </header>

      <div className="flex min-h-0 flex-1">
        <main className="flex min-w-0 flex-1 flex-col">
          <div className="flex h-[29px] shrink-0 items-center pr-[5px] pb-[3px] pl-[3px]">
            <Combo label="Name Box" value="A1:D1" width="w-[107px]" />
            <span className="mx-[3px] h-5 w-px bg-[#dddbd8]" />
            <button type="button" aria-label="Function Wizard" className="flex w-4 justify-center"><Glyph name="fx" /></button>
            <button type="button" aria-label="Select Function" className="flex w-4 justify-center"><Glyph name="sigma" /></button>
            <button type="button" aria-label="Function list" className="flex w-2 justify-center"><Caret /></button>
            <button type="button" aria-label="Formula" className="flex w-4 justify-center"><Glyph name="equals" /></button>
            <input aria-label="Input line" defaultValue="INSTRUÇÕES DE USO - CONTROLE DE INVENTÁRIO" className="h-[17px] min-w-0 flex-1 border border-[#d5d2ce] bg-white px-1 text-[9px] text-[#3d3d3d] outline-none" />
            <button type="button" aria-label="Expand Formula Bar" className="ml-[2px] flex w-2 justify-center"><Caret large /></button>
          </div>

          <div className="flex min-h-0 flex-1">
            <div className="min-w-0 flex-1 overflow-hidden"><Sheet /></div>
            <div className="flex w-[9px] shrink-0 flex-col items-center bg-[#cbcbcb]">
              <span className="mt-px h-px w-1.5 bg-[#222]" />
              <span className="mt-[3px] h-[247px] w-[5px] rounded-full bg-[#7d7f7f]" />
            </div>
          </div>
          <div className="mr-[9px] flex h-[9px] shrink-0 items-center justify-between bg-[#cbcbcb] px-0.5">
            <span className="h-[5px] w-[47%] rounded-full bg-[#7d7f7f]" />
            <span className="h-1.5 w-px bg-[#222]" />
          </div>

          <div role="tablist" className="flex h-[17px] shrink-0 items-stretch text-[8px]">
            <div className="flex w-[75px] items-center pl-1.5">
              <svg viewBox="0 0 60 12" fill="none" aria-hidden="true" className="h-3 w-[60px]">
                <path d="M1 1v10M8 1L3 6l5 5zM12 4L9 6l3 2zM20 3l-4 3 4 3zM25 3l-4 3 4 3zM29 3l-3 3 3 3zM32 3l3 3-3 3zM37 3l4 3-4 3zM42 3l4 3-4 3zM47 4l3 2-3 2zM51 1l5 5-5 5zM59 1v10" stroke="#cfcdca" strokeWidth=".900" />
              </svg>
            </div>
            <button type="button" aria-label="Add Sheet" className="mr-[9px] flex w-[17px] items-center">
              <svg viewBox="0 0 14 14" fill="none" className="size-3.5">
                <path d="M0 0h7l3 3v11H0z" fill="#fff" />
                <path d="M0 0v14" stroke="#bbb" />
                <circle cx="9.500" cy="7.500" r="1.800" fill="#fff" stroke="#1d66b5" strokeWidth="1.400" />
              </svg>
            </button>
            <button type="button" role="tab" className="w-10 whitespace-nowrap">Inventário</button>
            <span className="my-1 ml-[8px] w-px bg-[#c9c7c4]" />
            <button type="button" role="tab" className="w-12 whitespace-nowrap">Resumo</button>
            <span className="my-1 w-px bg-[#a9a7a4]" />
            <button type="button" role="tab" aria-selected="true" className="mb-px w-[58px] border-b-2 border-[#8a8a8a] bg-white pt-0.5 font-bold whitespace-nowrap text-[#222]">Instruções</button>
          </div>
        </main>

        <aside className="relative flex w-[39px] shrink-0 flex-col items-center gap-[13px] border-l border-[#cfcdca] pt-[6px]">
          {panels.map(([name, label]) => (
            <button type="button" key={name} aria-label={label} className="flex size-4"><Glyph name={name} /></button>
          ))}
          <span className="absolute top-[268px] -left-px h-[50px] w-[5px] border-l-2 border-[#8a8a8a] bg-[#c4c2bf]" />
        </aside>
      </div>

      <footer className="flex h-[17px] shrink-0 items-stretch divide-x divide-[#e4e2df] border-t border-[#cfcdca] text-[8px] whitespace-nowrap">
        <div className="flex w-[180px] items-center gap-[7px] pl-1"><Glyph name="disk" />Sheet 3 of 3</div>
        <div className="flex w-[117px] items-center pl-1.5">Selected: 1 row, 4 columns</div>
        <div className="flex flex-1 items-center justify-center">PageStyle_Instruções</div>
        <div className="flex w-[170px] items-center justify-center">English (USA)</div>
        <div className="w-[45px]" />
        <div className="flex w-[31px] items-center justify-center">
          <svg viewBox="0 0 20 12" fill="none" aria-hidden="true" className="h-3 w-5">
            <rect x=".500" y="3" width="11" height="6.500" stroke={B} />
            <path d="M15.500 1h4M15.500 11h4M17.500 1v10" stroke={G} />
          </svg>
        </div>
        <div className="w-[20px]" />
        <div className="w-[21px]" />
        <div className="flex w-[183px] items-center justify-center">Average: ; Sum: 0</div>
        <div className="flex w-[95px] items-center justify-center gap-[5px]">
          <button type="button" aria-label="Zoom Out" className="flex"><svg viewBox="0 0 7 7" className="size-[7px]"><path d="M0 3.500h7" stroke="#222" strokeWidth="1.200" /></svg></button>
          <input
            type="range"
            aria-label="Zoom"
            defaultValue={50}
            className="h-2 w-16 appearance-none bg-transparent [&::-webkit-slider-runnable-track]:h-px [&::-webkit-slider-runnable-track]:bg-[#8c8c8c] [&::-webkit-slider-thumb]:-mt-[3px] [&::-webkit-slider-thumb]:h-[7px] [&::-webkit-slider-thumb]:w-[3px] [&::-webkit-slider-thumb]:appearance-none [&::-webkit-slider-thumb]:border [&::-webkit-slider-thumb]:border-[#444] [&::-webkit-slider-thumb]:bg-white"
          />
          <button type="button" aria-label="Zoom In" className="flex"><svg viewBox="0 0 7 7" className="size-[7px]"><path d="M0 3.500h7M3.500 0v7" stroke="#222" strokeWidth="1.200" /></svg></button>
        </div>
        <div className="flex w-[33px] items-center justify-center">100%</div>
      </footer>
    </div>
  );
}
